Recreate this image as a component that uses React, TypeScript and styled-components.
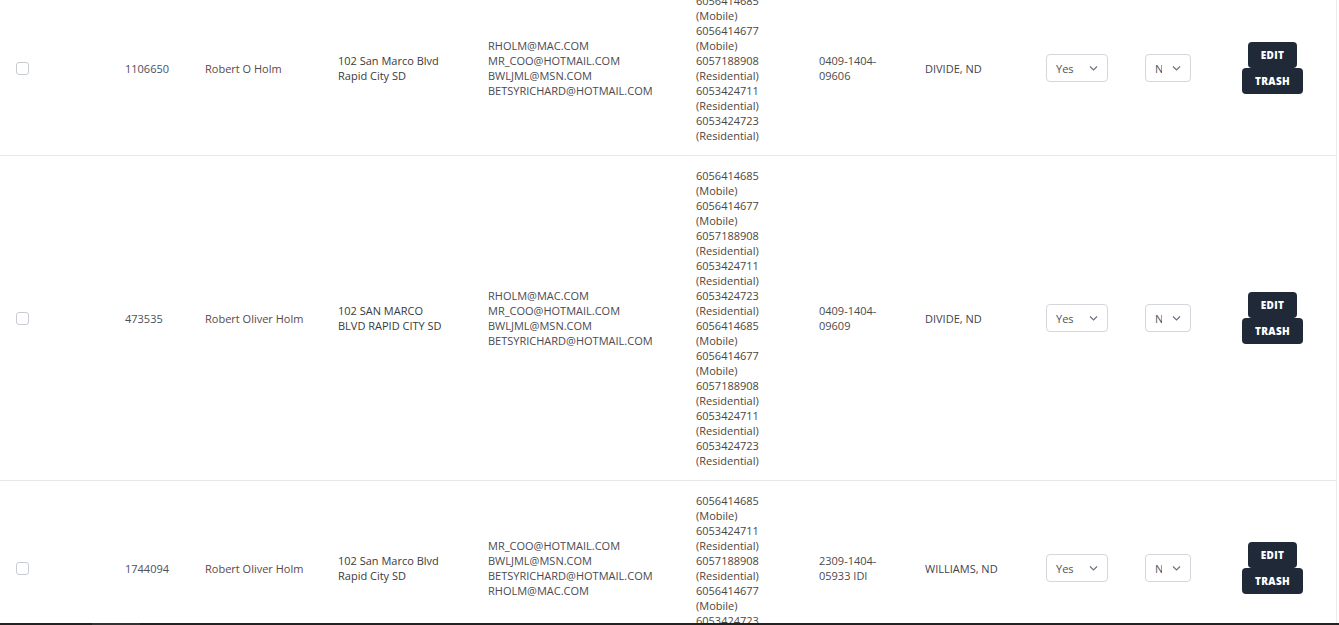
import React from "react";
import styled, { createGlobalStyle } from "styled-components";

const GlobalStyle = createGlobalStyle`
	body {
		margin: 0;
		background: #ffffff;
		font-family: "Open Sans", "Liberation Sans", sans-serif;
	}
`;

const Page = styled.div`
	display: flex;
	flex-direction: column;
	height: 625px;
	overflow: hidden;
`;

const ScrollArea = styled.div`
	flex: 1;
	overflow: hidden;
`;

const Table = styled.table`
	width: 1336px;
	margin-top: -19px;
	table-layout: fixed;
	border-collapse: collapse;
	border-right: 1px solid #ececec;
	font-size: 11px;
	line-height: 15px;
	color: #3f3f46;
`;

const Row = styled.tr`
	border-bottom: 1px solid #e5e7eb;
`;

const Cell = styled.td<{ $tone?: string }>`
	padding: 12px 16px;
	vertical-align: middle;
	color: ${(props) => props.$tone || "#3f3f46"};
	white-space: nowrap;
`;

const Lines = styled.div`
	display: flex;
	flex-direction: column;
`;

const Check = styled.input`
	appearance: none;
	display: block;
	width: 13px;
	height: 13px;
	margin: 0;
	border: 1px solid #c8ccd2;
	border-radius: 3px;
	background: #fff;
`;

const SelectWrap = styled.div<{ $width: number }>`
	position: relative;
	width: ${(props) => props.$width}px;
	height: 28px;
	svg {
		position: absolute;
		right: 10px;
		top: 10px;
		pointer-events: none;
	}
`;

const Select = styled.select`
	appearance: none;
	width: 100%;
	height: 100%;
	padding: 0 28px 0 9px;
	border: 1px solid #d4d6db;
	border-radius: 4px;
	background: #fff;
	font-family: inherit;
	font-size: 11px;
	color: #4b5563;
	outline: none;
`;

const Actions = styled.div`
	display: flex;
	flex-direction: column;
	align-items: center;
	width: 61px;
`;

const ActionButton = styled.button<{ $width: number }>`
	width: ${(props) => props.$width}px;
	height: 26px;
	border: none;
	border-radius: 4px;
	background: #1f2937;
	color: #ffffff;
	font-family: inherit;
	font-size: 10px;
	font-weight: 800;
	letter-spacing: 0.3px;
	padding: 0;
`;

const BottomBar = styled.div`
	height: 2px;
	background: #222222;
	display: flex;
	span {
		margin-left: 92px;
		width: 48px;
		background: #333333;
	}
`;

type Phone = [string, string];

type Owner = {
	id: string;
	name: string;
	address: string[];
	emails: string[];
	phones: Phone[];
	parcel: string[];
	county: string;
};

const P1: Phone[] = [
	["6056414685", "Mobile"],
	["6056414677", "Mobile"],
	["6057188908", "Residential"],
	["6053424711", "Residential"],
	["6053424723", "Residential"],
];

const owners: Owner[] = [
	{
		id: "1106650",
		name: "Robert O Holm",
		address: ["102 San Marco Blvd", "Rapid City SD"],
		emails: [
			"RHOLM@MAC.COM",
			"MR_COO@HOTMAIL.COM",
			"BWLJML@MSN.COM",
			"BETSYRICHARD@HOTMAIL.COM",
		],
		phones: P1,
		parcel: ["0409-1404-", "09606"],
		county: "DIVIDE, ND",
	},
	{
		id: "473535",
		name: "Robert Oliver Holm",
		address: ["102 SAN MARCO", "BLVD RAPID CITY SD"],
		emails: [
			"RHOLM@MAC.COM",
			"MR_COO@HOTMAIL.COM",
			"BWLJML@MSN.COM",
			"BETSYRICHARD@HOTMAIL.COM",
		],
		phones: [...P1, ...P1],
		parcel: ["0409-1404-", "09609"],
		county: "DIVIDE, ND",
	},
	{
		id: "1744094",
		name: "Robert Oliver Holm",
		address: ["102 San Marco Blvd", "Rapid City SD"],
		emails: [
			"MR_COO@HOTMAIL.COM",
			"BWLJML@MSN.COM",
			"BETSYRICHARD@HOTMAIL.COM",
			"RHOLM@MAC.COM",
		],
		phones: [
			["6056414685", "Mobile"],
			["6053424711", "Residential"],
			["6057188908", "Residential"],
			["6056414677", "Mobile"],
			["6053424723", "Residential"],
		],
		parcel: ["2309-1404-", "05933 IDI"],
		county: "WILLIAMS, ND",
	},
];

const widths = [109, 80, 133, 150, 208, 123, 106, 121, 99, 97, 110];

function Chevron() {
	return (
		<svg width="9" height="8" viewBox="0 0 9 8">
			<path d="M1 2.5 L4.5 6 L8 2.5" fill="none" stroke="#6b7280" strokeWidth="1.2" />
		</svg>
	);
}

function Dropdown({ width, value }: { width: number; value: string }) {
	return (
		<SelectWrap $width={width}>
			<Select defaultValue={value}>
				<option value="Yes">Yes</option>
				<option value="No">No</option>
			</Select>
			<Chevron />
		</SelectWrap>
	);
}

function OwnerRow({ owner }: { owner: Owner }) {
	return (
		<Row>
			<Cell>
				<Check type="checkbox" />
			</Cell>
			<Cell $tone="#4b5060">{owner.id}</Cell>
			<Cell $tone="#5b4848">{owner.name}</Cell>
			<Cell $tone="#3a3a3a">
				<Lines>
					{owner.address.map((line) => (
						<span key={line}>{line}</span>
					))}
				</Lines>
			</Cell>
			<Cell $tone="#4a4a52">
				<Lines>
					{owner.emails.map((email) => (
						<span key={email}>{email}</span>
					))}
				</Lines>
			</Cell>
			<Cell $tone="#4d4640">
				<Lines>
					{owner.phones.map(([num, type], i) => (
						<React.Fragment key={i}>
							<span>{num}</span>
							<span>({type})</span>
						</React.Fragment>
					))}
				</Lines>
			</Cell>
			<Cell $tone="#4b4b4b">
				<Lines>
					{owner.parcel.map((part) => (
						<span key={part}>{part}</span>
					))}
				</Lines>
			</Cell>
			<Cell $tone="#3f4350">{owner.county}</Cell>
			<Cell>
				<Dropdown width={62} value="Yes" />
			</Cell>
			<Cell>
				<Dropdown width={46} value="No" />
			</Cell>
			<Cell>
				<Actions>
					<ActionButton $width={49}>EDIT</ActionButton>
					<ActionButton $width={61}>TRASH</ActionButton>
				</Actions>
			</Cell>
		</Row>
	);
}

export default function App() {
	return (
		<Page>
			<GlobalStyle />
			<ScrollArea>
				<Table>
					<colgroup>
						{widths.map((w, i) => (
							<col key={i} style={{ width: w }} />
						))}
					</colgroup>
					<tbody>
						{owners.map((owner) => (
							<OwnerRow key={owner.id} owner={owner} />
						))}
					</tbody>
				</Table>
			</ScrollArea>
			<BottomBar>
				<span />
			</BottomBar>
		</Page>
	);
}
